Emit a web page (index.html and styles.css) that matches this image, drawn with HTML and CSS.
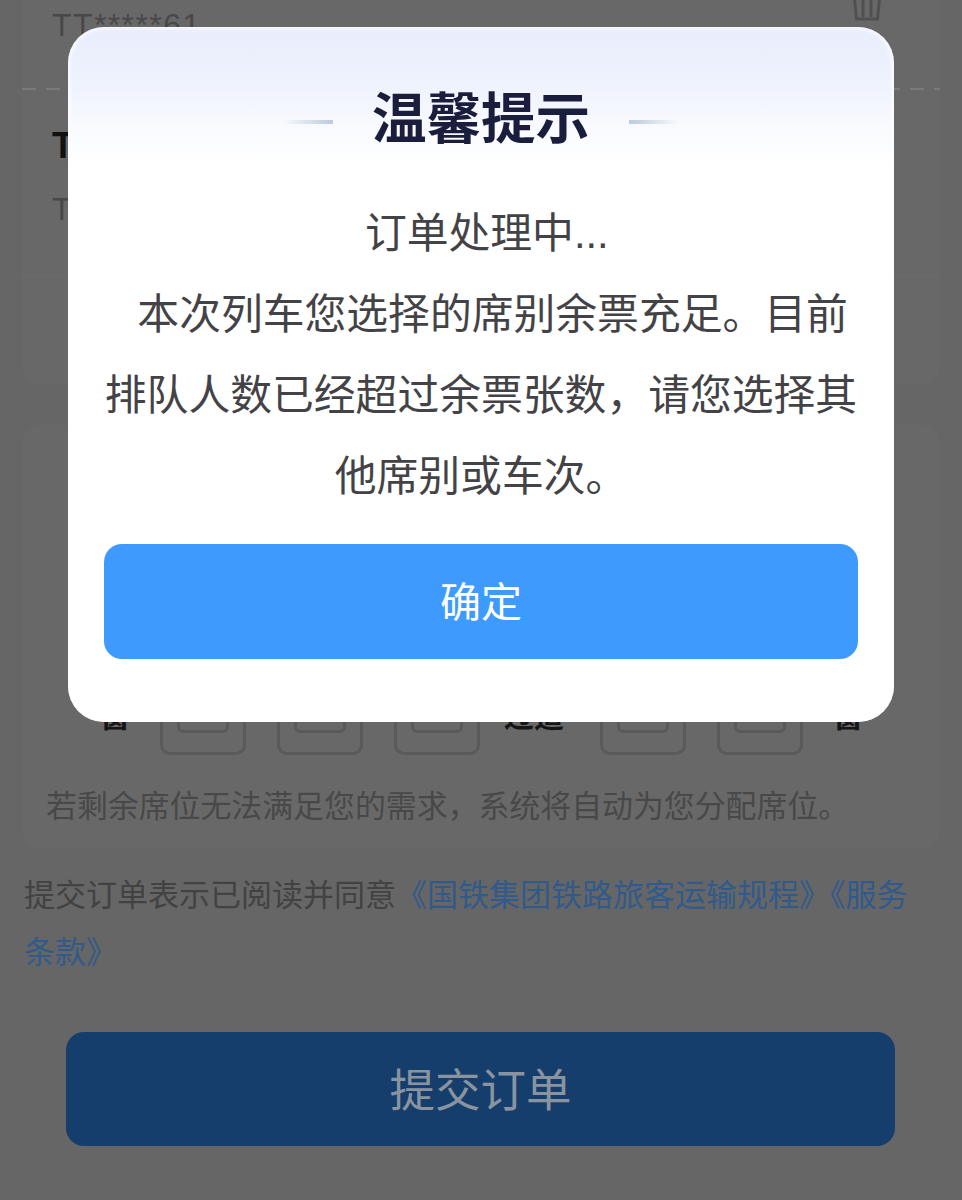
FILE: index.html
```html
<!DOCTYPE html>
<html lang="zh-CN">
<head>
    <meta charset="UTF-8">
    <meta name="viewport" content="width=device-width, initial-scale=1.0">
    <title>提交订单</title>
    <link rel="stylesheet" href="styles.css">
</head>
<body>
<div class="page">
    <div class="passengers">
        <div class="passenger first">
            <span class="passenger-id">TT*****61</span>
            <svg class="trash" viewBox="0 0 34 36" width="34" height="36">
                <path d="M0 8h34M4 8l2.500 25h21l2.500-25M13 10v21M21 10v21" fill="none" stroke="#505050" stroke-width="3"/>
            </svg>
        </div>
        <div class="passenger second">
            <span class="passenger-name">TT</span>
            <span class="passenger-id">TT*****61</span>
        </div>
        <div class="passenger third"></div>
    </div>

    <div class="seats">
        <div class="seat-row">
            <span class="seat-label">窗</span>
            <span class="seat-icon"><i></i></span>
            <span class="seat-icon"><i></i></span>
            <span class="seat-icon"><i></i></span>
            <span class="seat-label aisle">过道</span>
            <span class="seat-icon"><i></i></span>
            <span class="seat-icon"><i></i></span>
            <span class="seat-label">窗</span>
        </div>
        <p class="seat-note">若剩余席位无法满足您的需求，系统将自动为您分配席位。</p>
    </div>

    <p class="agreement">提交订单表示已阅读并同意<a href="#">《国铁集团铁路旅客运输规程》《服务条款》</a></p>

    <button class="submit">提交订单</button>

    <div class="overlay">
        <div class="dialog">
            <div class="dialog-title">
                <span class="flare left"></span>
                <h2>温馨提示</h2>
                <span class="flare right"></span>
            </div>
            <div class="dialog-text">&nbsp;订单处理中...<br>&nbsp;&nbsp;本次列车您选择的席别余票充足。目前排队人数已经超过余票张数，请您选择其他席别或车次。</div>
            <button class="confirm">确定</button>
        </div>
    </div>
</div>
</body>
</html>
```

FILE: styles.css
```css
body, html {
    margin: 0;
    height: 100%;
    font-family: "Liberation Sans", "Noto Sans CJK SC", sans-serif;
    background-color: #666666;
}

.page {
    position: relative;
    height: 1200px;
    overflow: hidden;
    background-color: #666666;
}

.passengers {
    margin: 0 22px;
    height: 385px;
    background-color: #686868;
    border-radius: 0 0 18px 18px;
}

.passenger {
    position: relative;
    padding: 0 30px;
}

.passenger.first {
    display: flex;
    justify-content: space-between;
    height: 90px;
    box-sizing: border-box;
    background: repeating-linear-gradient(to right, #7a7a7a 0, #7a7a7a 14px, transparent 14px, transparent 24px) bottom left / 100% 2px no-repeat;
}

.passenger.second {
    height: 185px;
    border-bottom: 1px solid #6c6c6c;
}

.passenger-id {
    font-size: 32px;
    letter-spacing: 1.4px;
    line-height: 50px;
    color: #484848;
}

.passenger.second .passenger-id {
    display: block;
    margin-top: 16px;
}

.passenger-name {
    display: block;
    padding-top: 34px;
    font-size: 36px;
    line-height: 44px;
    font-weight: bold;
    color: #111111;
}

.trash {
    margin: -14px 26px 0 0;
}

.seats {
    margin: 40px 22px 0;
    height: 423px;
    box-sizing: border-box;
    padding: 260px 24px 0;
    background-color: #686868;
    border-radius: 18px;
}

.seat-row {
    display: flex;
    align-items: flex-end;
    padding-left: 54px;
    height: 70px;
}

.seat-label {
    width: 30px;
    margin-right: 30px;
    padding-bottom: 20px;
    font-size: 30px;
    line-height: 36px;
    font-weight: bold;
    color: #151515;
}

.seat-label.aisle {
    width: 72px;
    margin: 0 24px;
}

.seat-row .seat-label:last-child {
    margin: 0 0 0 30px;
}

.seat-icon {
    display: block;
    box-sizing: border-box;
    width: 86px;
    height: 70px;
    margin-right: 31px;
    border: 3px solid #5a5a5a;
    border-top: none;
    border-radius: 10px;
}

.seat-icon i {
    display: block;
    box-sizing: border-box;
    width: 52px;
    height: 48px;
    margin: 0 auto;
    border: 3px solid #5a5a5a;
    border-radius: 6px;
}

.seat-row .seat-icon:nth-child(4) {
    margin-right: 0;
}

.seat-row .seat-icon:nth-child(7) {
    margin-right: 0;
}

.seat-note {
    margin: 30px 0 0;
    font-size: 30.9px;
    line-height: 44px;
    color: #484848;
}

.agreement {
    margin: 19px 30px 0 24px;
    font-size: 31px;
    line-height: 57px;
    color: #424242;
}

.agreement a {
    color: #315a8c;
    text-decoration: none;
}

.submit {
    display: block;
    width: 829px;
    height: 114px;
    margin: 51px 0 0 66px;
    padding: 0 0 5px;
    border: none;
    border-radius: 18px;
    background-color: #163e6c;
    color: #8a94a0;
    font-family: inherit;
    font-size: 45.5px;
}

.overlay {
    position: absolute;
    top: 27px;
    left: 68px;
}

.dialog {
    box-sizing: border-box;
    width: 826px;
    height: 695px;
    padding: 60px 36px 0;
    border-radius: 36px;
    background: linear-gradient(#e8edfc 0, #eff3fd 60px, #f8fafe 100px, #ffffff 138px);
    box-shadow: inset 0 0 4px 2px rgba(255, 255, 255, 0.8);
}

.dialog-title {
    position: relative;
    display: flex;
    justify-content: center;
}

.dialog-title h2 {
    margin: 0;
    font-size: 54.5px;
    line-height: 66px;
    font-weight: bold;
    color: #1a1d3c;
}

.flare {
    position: absolute;
    top: 33px;
    width: 50px;
    height: 4px;
}

.flare.left {
    left: 179px;
    background: linear-gradient(to right, rgba(190, 205, 222, 0), #bccadb);
}

.flare.right {
    right: 179px;
    background: linear-gradient(to left, rgba(190, 205, 222, 0), #bccadb);
}

.dialog-text {
    margin-top: 40px;
    font-size: 41.8px;
    line-height: 81px;
    text-align: center;
    color: #434347;
}

.confirm {
    display: block;
    width: 100%;
    height: 115px;
    margin-top: 27px;
    padding: 0 0 6px;
    border: none;
    border-radius: 18px;
    background-color: #3e9bfd;
    color: #ffffff;
    font-family: inherit;
    font-size: 41px;
}
```
